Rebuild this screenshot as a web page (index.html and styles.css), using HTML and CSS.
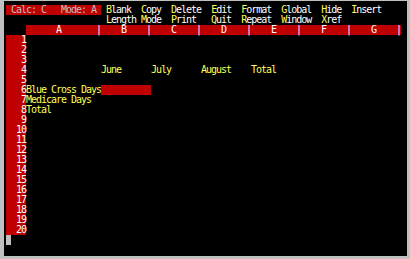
FILE: index.html
```html
<!DOCTYPE html>
<html lang="en">
<head>
    <meta charset="UTF-8">
    <title>Spreadsheet</title>
    <link rel="stylesheet" href="styles.css">
</head>
<body>
    <div class="pantalla">
        <div class="linea">
            <span class="estado"> Calc: C   Mode: A </span><span class="menu"> <b>B</b>lank  <b>C</b>opy  <b>D</b>elete  <b>E</b>dit  <b>F</b>ormat  <b>G</b>lobal  <b>H</b>ide  <b>I</b>nsert</span>
        </div>
        <div class="linea menu segunda"><b>L</b>ength <b>M</b>ode  <b>P</b>rint   <b>Q</b>uit  <b>R</b>epeat  <b>W</b>indow  <b>X</b>ref</div>
        <div class="linea cabecera"><span class="columnas">      A       |    B    |    C    |    D    |    E    |    F    |    G    |</span></div>

        <div class="hoja">
            <div class="fila"><span class="num">1</span></div>
            <div class="fila"><span class="num">2</span></div>
            <div class="fila"><span class="num">3</span></div>
            <div class="fila"><span class="num">4</span><span></span><span>June</span><span>July</span><span>August</span><span>Total</span></div>
            <div class="fila"><span class="num">5</span></div>
            <div class="fila"><span class="num">6</span><span>Blue Cross Days</span><span class="activa"></span></div>
            <div class="fila"><span class="num">7</span><span>Medicare Days</span></div>
            <div class="fila"><span class="num">8</span><span>Total</span></div>
            <div class="fila"><span class="num">9</span></div>
            <div class="fila"><span class="num">10</span></div>
            <div class="fila"><span class="num">11</span></div>
            <div class="fila"><span class="num">12</span></div>
            <div class="fila"><span class="num">13</span></div>
            <div class="fila"><span class="num">14</span></div>
            <div class="fila"><span class="num">15</span></div>
            <div class="fila"><span class="num">16</span></div>
            <div class="fila"><span class="num">17</span></div>
            <div class="fila"><span class="num">18</span></div>
            <div class="fila"><span class="num">19</span></div>
            <div class="fila"><span class="num">20</span></div>
        </div>

        <div class="linea"><span class="cursor"></span></div>
    </div>
</body>
</html>
```

FILE: styles.css
```css
:root {
    --rojo: #bf0000;
    --amarillo: #ffff55;
    --gris: #c0c0c0;
}

body {
    margin: 0;
    width: 410px;
    height: 259px;
    background-color: var(--gris);
    font-family: "DejaVu Sans Mono", monospace;
    font-size: 10px;
    letter-spacing: -1.02px;
    overflow: hidden;
}

.pantalla {
    margin: 1px 0 0 4px;
    width: 403px;
    height: 255px;
    box-sizing: border-box;
    padding: 4px 0 0 2px;
    background-color: #000;
}

.linea {
    height: 10px;
    line-height: 10px;
    white-space: pre;
    display: flex;
}

.estado {
    background-color: var(--rojo);
    color: var(--gris);
}

.menu {
    color: #fff;
}

.menu b {
    font-weight: normal;
    color: var(--amarillo);
}

.segunda {
    padding-left: 100px;
}

.cabecera {
    padding-left: 20px;
}

.columnas {
    background-color: var(--rojo);
    color: #fff;
}

.fila {
    display: grid;
    grid-template-columns: 20px 75px repeat(6, 50px);
    height: 10px;
    line-height: 10px;
    white-space: pre;
    color: var(--amarillo);
}

.num {
    background-color: var(--rojo);
    color: #fff;
    text-align: right;
}

.activa {
    background-color: var(--rojo);
}

.cursor {
    width: 5px;
    height: 10px;
    background-color: var(--gris);
}
```
